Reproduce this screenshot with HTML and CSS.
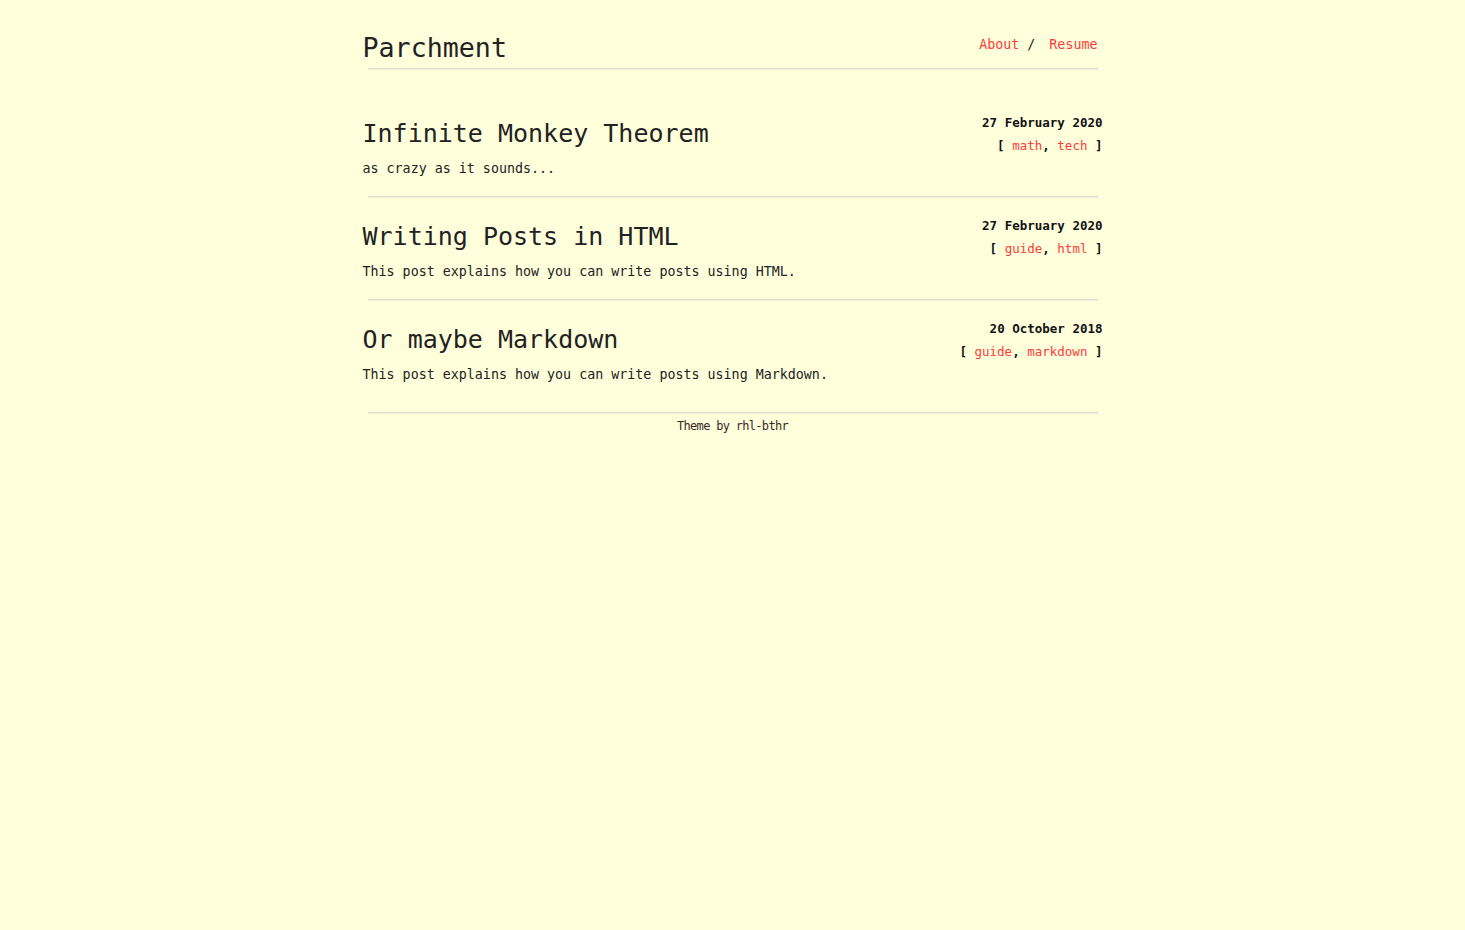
FILE: index.html
```html
<!DOCTYPE html>
<html lang="en">
<head>
<meta charset="utf-8">
<title>Parchment</title>
<link rel="stylesheet" href="styles.css">
</head>
<body>
<div class="page">
  <header class="site-header">
    <h1 class="site-title">Parchment</h1>
    <nav class="site-nav"><a href="#">About</a> / <a class="nav-second" href="#">Resume</a></nav>
  </header>
  <hr class="rule">
  <main class="posts">
    <article class="post">
      <div class="post-main">
        <h2 class="post-title">Infinite Monkey Theorem</h2>
        <p class="post-desc">as crazy as it sounds...</p>
      </div>
      <div class="post-meta">
        <div class="post-date">27 February 2020</div>
        <div class="post-tags">[ <a href="#">math</a>, <a href="#">tech</a> ]</div>
      </div>
    </article>
    <hr class="rule">
    <article class="post">
      <div class="post-main">
        <h2 class="post-title">Writing Posts in HTML</h2>
        <p class="post-desc">This post explains how you can write posts using HTML.</p>
      </div>
      <div class="post-meta">
        <div class="post-date">27 February 2020</div>
        <div class="post-tags">[ <a href="#">guide</a>, <a href="#">html</a> ]</div>
      </div>
    </article>
    <hr class="rule">
    <article class="post">
      <div class="post-main">
        <h2 class="post-title">Or maybe Markdown</h2>
        <p class="post-desc">This post explains how you can write posts using Markdown.</p>
      </div>
      <div class="post-meta">
        <div class="post-date">20 October 2018</div>
        <div class="post-tags">[ <a href="#">guide</a>, <a href="#">markdown</a> ]</div>
      </div>
    </article>
  </main>
  <footer class="site-footer">
    <hr class="rule">
    <p class="footer-text">Theme by <a href="#">rhl-bthr</a></p>
  </footer>
</div>
</body>
</html>
```

FILE: styles.css
```css
html, body {
  margin: 0;
  padding: 0;
  background: #ffffdc;
}

body {
  font-family: "DejaVu Sans Mono", "Liberation Mono", monospace;
  color: #222;
}

a {
  color: #ff3b3b;
  text-decoration: none;
}

.page {
  width: 740px;
  margin: 0 auto;
}

.site-header {
  display: flex;
  justify-content: space-between;
  align-items: flex-start;
  padding-top: 32px;
}

.site-title {
  margin: 0;
  font-size: 26.67px;
  line-height: 32px;
  font-weight: normal;
  color: #222;
}

.site-nav {
  margin-top: 5px;
  margin-right: 5px;
  font-size: 13.33px;
  line-height: 16px;
  color: #222;
}

.nav-second {
  margin-left: 6px;
}

.rule {
  margin: 0 5px;
  height: 0;
  border: 0;
  border-top: 1px solid #ddddcc;
  border-bottom: 1px solid #f0f0dc;
}

.site-header + .rule {
  margin-top: 4px;
}

.posts {
  margin-top: 25px;
}

.post {
  display: flex;
  justify-content: space-between;
  padding: 16px 0 17px;
}

.post-title {
  margin: 0;
  font-size: 25px;
  line-height: 46px;
  font-weight: normal;
  color: #222;
}

.post-desc {
  margin: 0;
  padding-top: 2px;
  font-size: 13.33px;
  line-height: 20px;
}

.post-meta {
  text-align: right;
  font-size: 12.5px;
  line-height: 23px;
}

.post-date {
  font-weight: bold;
  color: #111;
}

.post-tags {
  font-weight: bold;
  color: #111;
}

.post-tags a {
  font-weight: normal;
}

.site-footer {
  margin-top: 10px;
}

.footer-text {
  margin: 4px 0 0;
  text-align: center;
  font-size: 12px;
  letter-spacing: -0.7px;
  line-height: 16px;
  color: #3a2a2a;
}

.footer-text a {
  color: #3a2a2a;
}
```
